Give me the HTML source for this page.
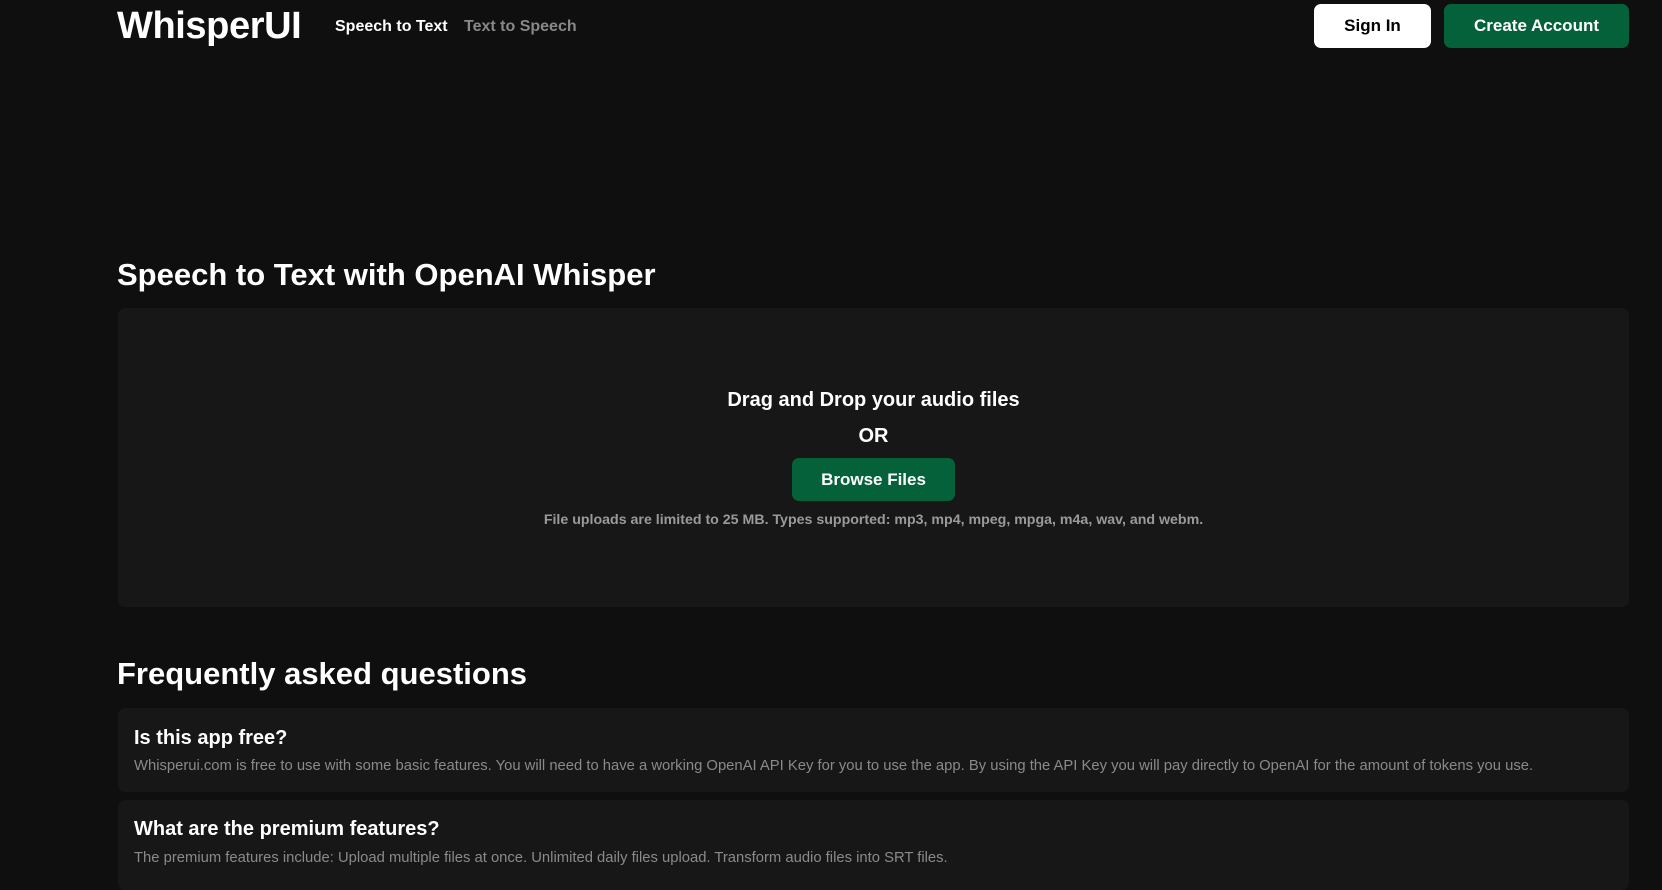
<!DOCTYPE html>
<html><head><meta charset="utf-8"><style>
*{margin:0;padding:0;box-sizing:border-box}
body{width:1662px;height:877px;overflow:hidden;background:#0f0f0f;font-family:"Liberation Sans",sans-serif;color:#fff;position:relative}
.a{position:absolute;white-space:nowrap}
.btn{position:absolute;border-radius:7px;display:flex;align-items:center;justify-content:center;font-weight:bold;font-size:17px}
.card{position:absolute;left:118px;width:1511px;background:#171717;border-radius:7px}
</style></head><body>
<div class="a" style="left:117px;top:5px;font-size:38px;font-weight:bold;letter-spacing:-0.4px">WhisperUI</div>
<div class="a" style="left:335px;top:18px;font-size:16px;font-weight:bold">Speech to Text</div>
<div class="a" style="left:464px;top:18px;font-size:16px;font-weight:bold;color:#888">Text to Speech</div>
<div class="btn" style="left:1314px;top:4px;width:117px;height:44px;background:#fff;color:#000">Sign In</div>
<div class="btn" style="left:1444px;top:4px;width:185px;height:44px;background:#05613a;color:#fff">Create Account</div>
<div class="a" style="left:117px;top:257px;font-size:31px;font-weight:bold">Speech to Text with OpenAI Whisper</div>
<div class="card" style="top:308px;height:299px"></div>
<div class="a" style="left:0;width:1747px;text-align:center;top:389px;font-size:20px;font-weight:bold">Drag and Drop your audio files</div>
<div class="a" style="left:0;width:1747px;text-align:center;top:425px;font-size:20px;font-weight:bold">OR</div>
<div class="btn" style="left:792px;top:458px;width:163px;height:43px;background:#05613a">Browse Files</div>
<div class="a" style="left:0;width:1747px;text-align:center;top:512px;font-size:14.2px;font-weight:bold;color:#9a9a9a">File uploads are limited to 25 MB. Types supported: mp3, mp4, mpeg, mpga, m4a, wav, and webm.</div>
<div class="a" style="left:117px;top:656px;font-size:31px;font-weight:bold">Frequently asked questions</div>
<div class="card" style="top:708px;height:84px"></div>
<div class="a" style="left:134px;top:727px;font-size:20px;font-weight:bold">Is this app free?</div>
<div class="a" style="left:134px;top:758px;font-size:14.8px;color:#8a8a8a">Whisperui.com is free to use with some basic features. You will need to have a working OpenAI API Key for you to use the app. By using the API Key you will pay directly to OpenAI for the amount of tokens you use.</div>
<div class="card" style="top:800px;height:90px"></div>
<div class="a" style="left:134px;top:818px;font-size:20px;font-weight:bold">What are the premium features?</div>
<div class="a" style="left:134px;top:850px;font-size:14.8px;color:#8a8a8a">The premium features include: Upload multiple files at once. Unlimited daily files upload. Transform audio files into SRT files.</div>
</body></html>
